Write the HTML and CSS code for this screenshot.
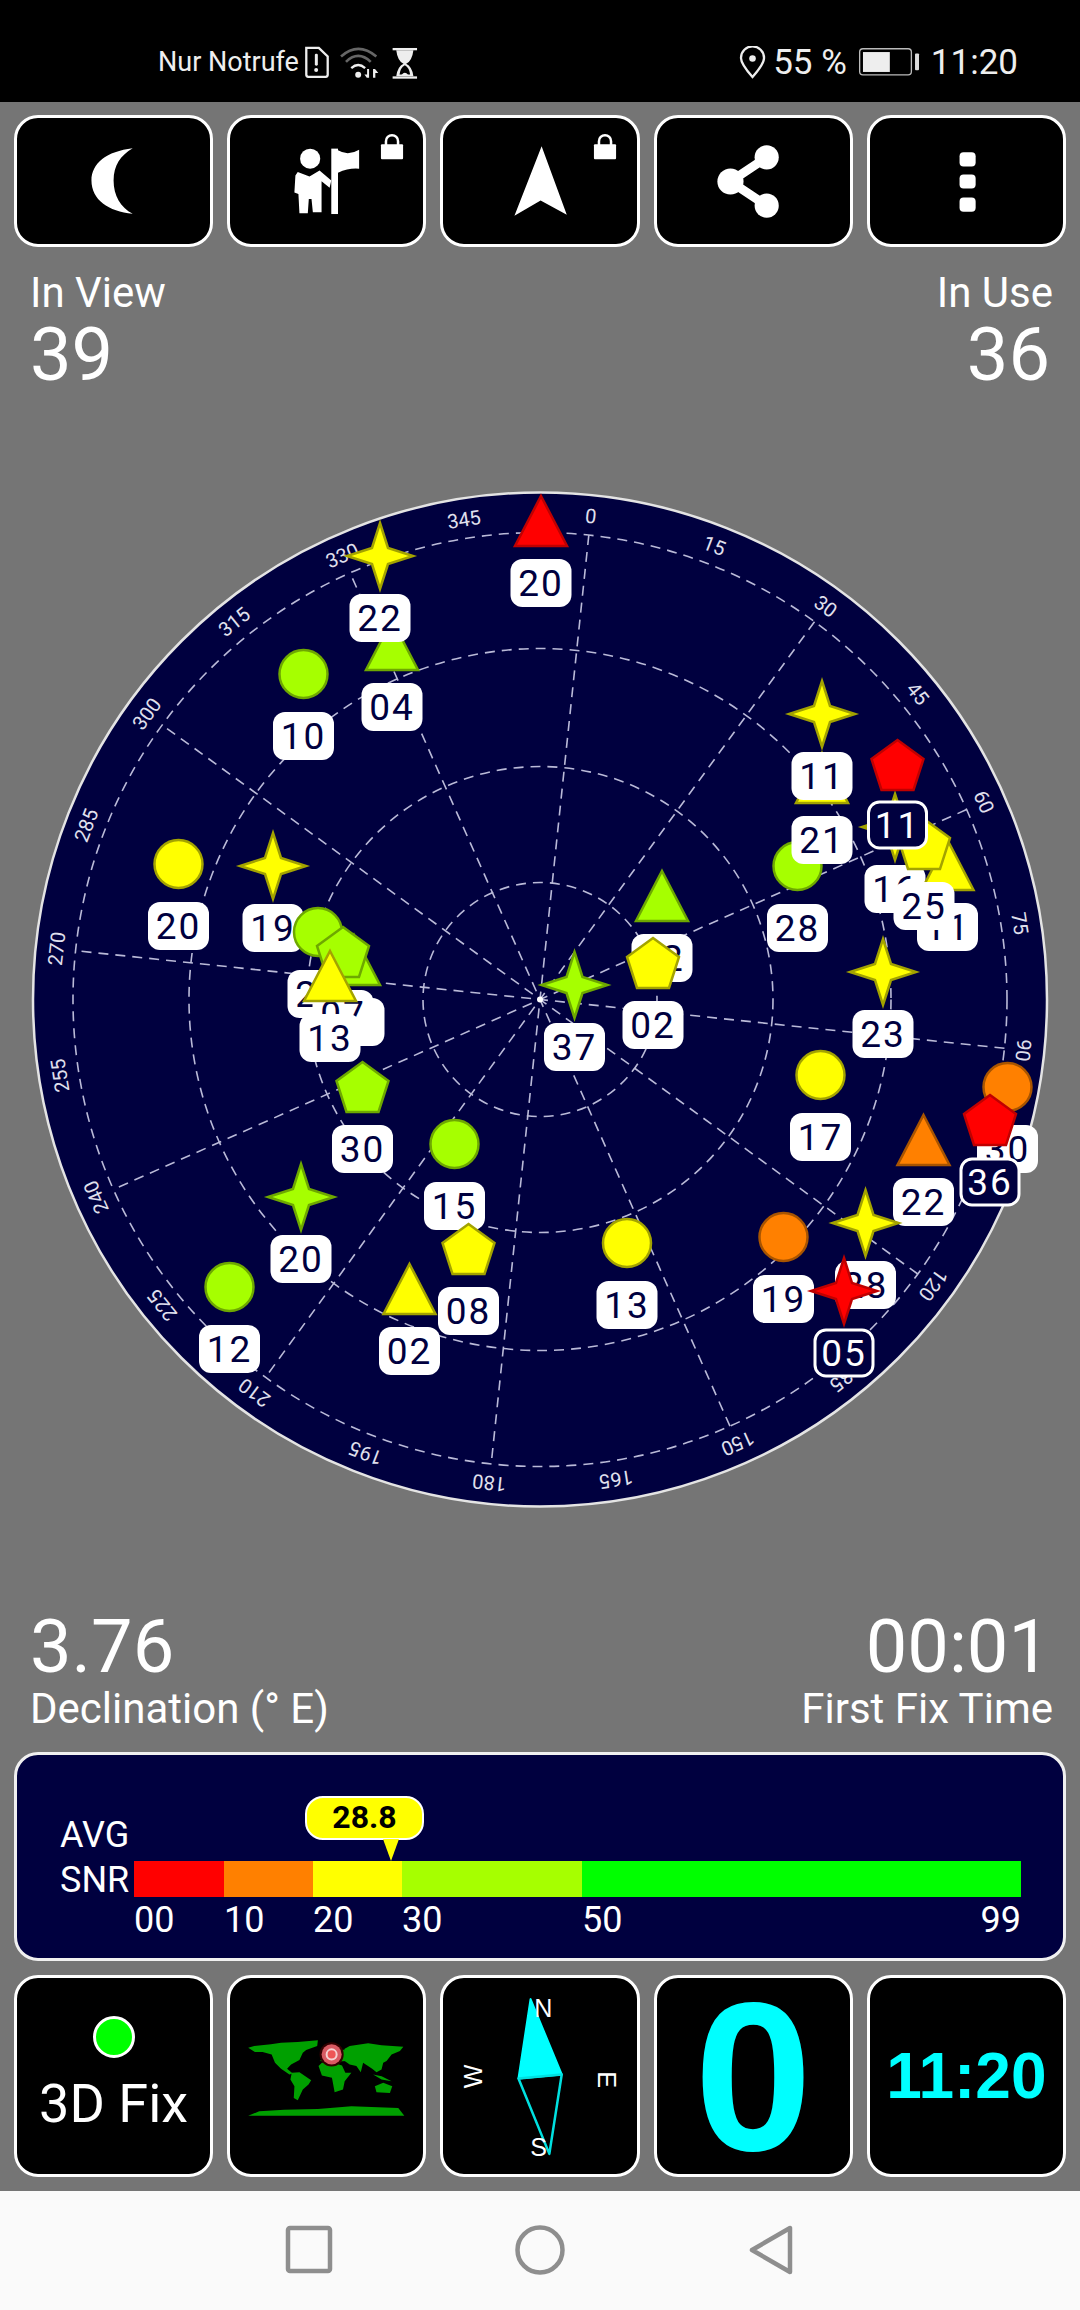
FILE: index.html
```html
<!DOCTYPE html>
<html lang="de">
<head>
    <meta charset="UTF-8">
    <title>GPS Test</title>
    <link rel="stylesheet" href="styles.css">
</head>
<body>
    <div class="status-bar">
        <span class="carrier">Nur Notrufe</span>
        <svg class="ic-sim" viewBox="40 28 85 105">
            <path class="st-line" d="M50 36H88L115 62V118Q115 124 109 124H56Q50 124 50 118Z"/>
            <rect class="st-fill" x="76" y="54" width="9" height="36" rx="4"/>
            <circle class="st-fill" cx="80" cy="103" r="6"/>
        </svg>
        <svg class="ic-wifi" viewBox="150 30 125 100">
            <path class="st-dim" d="M155 62Q207 16 262 62"/>
            <path class="st-dim" d="M170 78Q207 42 245 78"/>
            <path class="st-line" d="M186 97Q207 78 228 97"/>
            <circle class="st-fill" cx="207" cy="117" r="9"/>
            <path class="st-fill" d="M240 100V126H233L226 116H234V100ZM252 100H258L268 112H259V126H252Z"/>
        </svg>
        <svg class="ic-glass" viewBox="305 30 80 100">
            <rect class="st-fill" x="309" y="36" width="74" height="7"/>
            <rect class="st-fill" x="309" y="122" width="74" height="7"/>
            <path class="st-fill" d="M320 43H372Q368 76 350 84Q368 92 372 122H320Q324 92 342 84Q324 76 320 43Z"/>
            <path class="st-cut" d="M346 88Q332 96 330 116H362Q360 96 346 88Z"/>
            <path class="st-fill" d="M336 118Q346 104 356 118Z"/>
        </svg>
        <svg class="ic-pin" viewBox="22 30 85 100">
            <path class="st-line" d="M63 124Q28 84 28 66A35 35 0 0 1 98 66Q98 84 63 124Z"/>
            <circle class="st-fill" cx="63" cy="68" r="10"/>
        </svg>
        <span class="percent">55 %</span>
        <svg class="ic-batt" viewBox="372 38 190 90">
            <rect class="batt-case" x="377" y="43" width="156" height="79" rx="10"/>
            <rect class="st-fill" x="387" y="53" width="81" height="60"/>
            <rect class="batt-nub" x="544" y="57" width="12" height="51" rx="3"/>
        </svg>
        <span class="clock">11:20</span>
    </div>

    <div class="tile-row tools">
        <div class="tile">
            <svg viewBox="0 0 192 125"><path class="wh" d="M115 30C89 33 74 45 74 62C74 81 91 93 115 95C103 89 96 77 96 62C96 47 103 37 115 30Z"/></svg>
        </div>
        <div class="tile">
            <svg viewBox="0 0 192 125">
                <defs>
                    <g id="lock">
                        <rect class="wh" x="149" y="26" width="22" height="15" rx="1"/>
                        <path class="lock-arc" d="M154 27V23A6 6 0 0 1 166 23V27"/>
                    </g>
                </defs>
                <g transform="translate(-1 2) scale(.3333)">
                    <circle class="wh" cx="242" cy="115" r="30"/>
                    <path class="wh" d="M205 155L240 168L270 150L305 180L300 202L276 182V275H250L246 235H238L235 278H210L207 220L195 216L198 165Z"/>
                    <rect class="wh" x="305" y="85" width="20" height="195"/>
                    <path class="wh" d="M325 90Q355 108 388 88V145Q358 142 325 157Z"/>
                </g>
                <use href="#lock" transform="translate(1 0)"/>
            </svg>
        </div>
        <div class="tile">
            <svg viewBox="0 0 192 125">
                <path class="wh" d="M98 28L123 96L97 82L71 97Z"/>
                <use href="#lock" transform="translate(1 0)"/>
            </svg>
        </div>
        <div class="tile">
            <svg viewBox="0 0 192 125">
                <path class="share-line" d="M109 39L73 63L109 87"/>
                <circle class="wh" cx="109" cy="39" r="12"/>
                <circle class="wh" cx="73" cy="63" r="13"/>
                <circle class="wh" cx="109" cy="87" r="12"/>
            </svg>
        </div>
        <div class="tile">
            <svg viewBox="0 0 192 125">
                <rect class="wh" x="89" y="34" width="16" height="14" rx="4"/>
                <rect class="wh" x="89" y="56" width="16" height="14" rx="4"/>
                <rect class="wh" x="89" y="79" width="16" height="14" rx="4"/>
            </svg>
        </div>
    </div>

    <div class="stats">
        <div class="stat">
            <div class="stat-label">In View</div>
            <div class="stat-num">39</div>
        </div>
        <div class="stat stat-right">
            <div class="stat-label">In Use</div>
            <div class="stat-num">36</div>
        </div>
    </div>

    <svg class="radar" viewBox="0 393 1080 1216">
        <defs>
            <polygon id="star" points="0,-33 8,-8 33,0 8,8 0,33 -8,8 -33,0 -8,-8"/>
            <polygon id="tri" points="0,-25 26,25 -26,25"/>
            <polygon id="pent" points="0,-25 26,-6 16,25 -16,25 -26,-6"/>
            <circle id="dot" r="24"/>
        </defs>

        <g transform="translate(540 999.5)">
            <circle class="rim" r="507"/>
            <circle class="ring" r="467"/>
            <circle class="ring" r="351"/>
            <circle class="ring" r="233"/>
            <circle class="ring" r="117"/>
            <g transform="rotate(6)">
                <line class="spoke" y1="-467" y2="467"/>
                <line class="spoke" y1="-467" y2="467" transform="rotate(30)"/>
                <line class="spoke" y1="-467" y2="467" transform="rotate(60)"/>
                <line class="spoke" y1="-467" y2="467" transform="rotate(90)"/>
                <line class="spoke" y1="-467" y2="467" transform="rotate(120)"/>
                <line class="spoke" y1="-467" y2="467" transform="rotate(150)"/>
                <text class="deg" y="-479">0</text>
                <text class="deg" y="-479" transform="rotate(15)">15</text>
                <text class="deg" y="-479" transform="rotate(30)">30</text>
                <text class="deg" y="-479" transform="rotate(45)">45</text>
                <text class="deg" y="-479" transform="rotate(60)">60</text>
                <text class="deg" y="-479" transform="rotate(75)">75</text>
                <text class="deg" y="-479" transform="rotate(90)">90</text>
                <text class="deg" y="-479" transform="rotate(105)">105</text>
                <text class="deg" y="-479" transform="rotate(120)">120</text>
                <text class="deg" y="-479" transform="rotate(135)">135</text>
                <text class="deg" y="-479" transform="rotate(150)">150</text>
                <text class="deg" y="-479" transform="rotate(165)">165</text>
                <text class="deg" y="-479" transform="rotate(180)">180</text>
                <text class="deg" y="-479" transform="rotate(195)">195</text>
                <text class="deg" y="-479" transform="rotate(210)">210</text>
                <text class="deg" y="-479" transform="rotate(225)">225</text>
                <text class="deg" y="-479" transform="rotate(240)">240</text>
                <text class="deg" y="-479" transform="rotate(255)">255</text>
                <text class="deg" y="-479" transform="rotate(270)">270</text>
                <text class="deg" y="-479" transform="rotate(285)">285</text>
                <text class="deg" y="-479" transform="rotate(300)">300</text>
                <text class="deg" y="-479" transform="rotate(315)">315</text>
                <text class="deg" y="-479" transform="rotate(330)">330</text>
                <text class="deg" y="-479" transform="rotate(345)">345</text>
            </g>
            <circle class="hub" r="3"/>
        </g>

        <!-- satellites, drawn in this order so they overlap like the app -->
        <g class="sat red" transform="translate(541 521)"><use href="#tri"/><rect class="tag" x="-30.5" y="38" width="61" height="48" rx="12"/><text y="75">20</text></g>
        <g class="sat lime" transform="translate(392 645)"><use href="#tri"/><rect class="tag" x="-30.5" y="38" width="61" height="48" rx="12"/><text y="75">04</text></g>
        <g class="sat yellow" transform="translate(380 556)"><use href="#star"/><rect class="tag" x="-30.5" y="38" width="61" height="48" rx="12"/><text y="75">22</text></g>
        <g class="sat lime" transform="translate(303.5 674)"><use href="#dot"/><rect class="tag" x="-30.5" y="38" width="61" height="48" rx="12"/><text y="75">10</text></g>
        <g class="sat yellow" transform="translate(178.5 864)"><use href="#dot"/><rect class="tag" x="-30.5" y="38" width="61" height="48" rx="12"/><text y="75">20</text></g>
        <g class="sat yellow" transform="translate(273 866)"><use href="#star"/><rect class="tag" x="-30.5" y="38" width="61" height="48" rx="12"/><text y="75">19</text></g>
        <g class="sat lime" transform="translate(318 932)"><use href="#dot"/><rect class="tag" x="-30.5" y="38" width="61" height="48" rx="12"/><text y="75">21</text></g>
        <g class="sat lime" transform="translate(354 960)"><use href="#tri"/><rect class="tag" x="-30.5" y="38" width="61" height="48" rx="12"/><text y="75">09</text></g>
        <g class="sat lime" transform="translate(343 952)"><use href="#pent"/><rect class="tag" x="-30.5" y="38" width="61" height="48" rx="12"/><text y="75">07</text></g>
        <g class="sat yellow" transform="translate(330 976)"><use href="#tri"/><rect class="tag" x="-30.5" y="38" width="61" height="48" rx="12"/><text y="75">13</text></g>
        <g class="sat lime" transform="translate(362.5 1087)"><use href="#pent"/><rect class="tag" x="-30.5" y="38" width="61" height="48" rx="12"/><text y="75">30</text></g>
        <g class="sat lime" transform="translate(454.5 1144)"><use href="#dot"/><rect class="tag" x="-30.5" y="38" width="61" height="48" rx="12"/><text y="75">15</text></g>
        <g class="sat yellow" transform="translate(468.5 1249)"><use href="#pent"/><rect class="tag" x="-30.5" y="38" width="61" height="48" rx="12"/><text y="75">08</text></g>
        <g class="sat lime" transform="translate(301 1197)"><use href="#star"/><rect class="tag" x="-30.5" y="38" width="61" height="48" rx="12"/><text y="75">20</text></g>
        <g class="sat yellow" transform="translate(409.5 1289)"><use href="#tri"/><rect class="tag" x="-30.5" y="38" width="61" height="48" rx="12"/><text y="75">02</text></g>
        <g class="sat lime" transform="translate(229.5 1287)"><use href="#dot"/><rect class="tag" x="-30.5" y="38" width="61" height="48" rx="12"/><text y="75">12</text></g>
        <g class="sat lime" transform="translate(797.5 866)"><use href="#dot"/><rect class="tag" x="-30.5" y="38" width="61" height="48" rx="12"/><text y="75">28</text></g>
        <g class="sat yellow" transform="translate(822 778)"><use href="#tri"/><rect class="tag" x="-30.5" y="38" width="61" height="48" rx="12"/><text y="75">21</text></g>
        <g class="sat yellow" transform="translate(822 714)"><use href="#star"/><rect class="tag" x="-30.5" y="38" width="61" height="48" rx="12"/><text y="75">11</text></g>
        <g class="sat yellow" transform="translate(895 827)"><use href="#star"/><rect class="tag" x="-30.5" y="38" width="61" height="48" rx="12"/><text y="75">16</text></g>
        <g class="sat yellow" transform="translate(947.5 865)"><use href="#tri"/><rect class="tag" x="-30.5" y="38" width="61" height="48" rx="12"/><text y="75">11</text></g>
        <g class="sat yellow" transform="translate(924 844)"><use href="#pent"/><rect class="tag" x="-30.5" y="38" width="61" height="48" rx="12"/><text y="75">25</text></g>
        <g class="sat lime" transform="translate(662 896)"><use href="#tri"/><rect class="tag" x="-30.5" y="38" width="61" height="48" rx="12"/><text y="75">12</text></g>
        <g class="sat yellow" transform="translate(653 963)"><use href="#pent"/><rect class="tag" x="-30.5" y="38" width="61" height="48" rx="12"/><text y="75">02</text></g>
        <g class="sat lime" transform="translate(574.5 985)"><use href="#star"/><rect class="tag" x="-30.5" y="38" width="61" height="48" rx="12"/><text y="75">37</text></g>
        <g class="sat yellow" transform="translate(883 972)"><use href="#star"/><rect class="tag" x="-30.5" y="38" width="61" height="48" rx="12"/><text y="75">23</text></g>
        <g class="sat yellow" transform="translate(820.5 1075)"><use href="#dot"/><rect class="tag" x="-30.5" y="38" width="61" height="48" rx="12"/><text y="75">17</text></g>
        <g class="sat yellow" transform="translate(627 1243)"><use href="#dot"/><rect class="tag" x="-30.5" y="38" width="61" height="48" rx="12"/><text y="75">13</text></g>
        <g class="sat orange" transform="translate(783.5 1237)"><use href="#dot"/><rect class="tag" x="-30.5" y="38" width="61" height="48" rx="12"/><text y="75">19</text></g>
        <g class="sat orange" transform="translate(923.5 1140)"><use href="#tri"/><rect class="tag" x="-30.5" y="38" width="61" height="48" rx="12"/><text y="75">22</text></g>
        <g class="sat yellow" transform="translate(865.5 1223)"><use href="#star"/><rect class="tag" x="-30.5" y="38" width="61" height="48" rx="12"/><text y="75">28</text></g>
        <g class="sat orange" transform="translate(1007.5 1087)"><use href="#dot"/><rect class="tag" x="-30.5" y="38" width="61" height="48" rx="12"/><text y="75">30</text></g>
        <g class="sat red sel" transform="translate(897.5 765)"><use href="#pent"/><rect class="tag" x="-29" y="37" width="58" height="46" rx="11"/><text y="73">11</text></g>
        <g class="sat red sel" transform="translate(990 1120)"><use href="#pent"/><rect class="tag" x="-29" y="39" width="58" height="46" rx="11"/><text y="75">36</text></g>
        <g class="sat red sel" transform="translate(844 1291)"><use href="#star"/><rect class="tag" x="-29" y="39" width="58" height="46" rx="11"/><text y="75">05</text></g>
    </svg>

    <div class="stats">
        <div class="stat">
            <div class="stat-num">3.76</div>
            <div class="stat-label">Declination (° E)</div>
        </div>
        <div class="stat stat-right">
            <div class="stat-num">00:01</div>
            <div class="stat-label">First Fix Time</div>
        </div>
    </div>

    <div class="snr-panel">
        <div class="snr-names">
            <div>AVG</div>
            <div>SNR</div>
        </div>
        <div class="snr-main">
            <div class="snr-bar">
                <div class="seg seg-a"></div>
                <div class="seg seg-b"></div>
                <div class="seg seg-c"></div>
                <div class="seg seg-d"></div>
                <div class="seg seg-e"></div>
            </div>
            <div class="snr-bar snr-scale">
                <div class="seg seg-a">00</div>
                <div class="seg seg-b">10</div>
                <div class="seg seg-c">20</div>
                <div class="seg seg-d">30</div>
                <div class="seg seg-e"><span>50</span><span>99</span></div>
            </div>
        </div>
        <div class="snr-bubble">28.8</div>
    </div>

    <div class="tile-row tiles-bottom">
        <div class="tile tile-fix">
            <div class="fix-dot"></div>
            <div class="fix-text">3D Fix</div>
        </div>
        <div class="tile">
            <svg viewBox="0 0 192 195">
                <g class="land" transform="translate(4 51) scale(.3333)">
                    <path d="M42 55L60 50L110 45L140 40L190 38L250 33L248 50L215 62L205 70L195 92L170 105L158 118L175 132L165 135L140 118L122 100L112 75L85 68L62 68Z"/>
                    <path d="M172 130L195 128L230 152L222 165L205 180L190 212L178 205L180 170L168 150Z"/>
                    <path d="M252 110L262 100L290 98L322 108L332 130L350 130L330 155L325 180L300 188L292 145L262 138Z"/>
                    <path d="M255 95L330 60L335 95L290 98Z"/>
                    <path d="M330 58L345 50L400 42L440 48L505 52L495 65L470 75L455 95L445 100L440 120L425 128L412 118L385 100L378 128L365 110L345 105L330 95Z"/>
                    <path d="M420 170L445 160L472 170L465 190L425 188Z"/>
                    <path d="M415 135L440 140L470 155L440 150Z"/>
                    <path d="M42 258L75 245L150 240L250 238L350 230L490 235L508 258Z"/>
                </g>
                <circle class="loc-shadow" cx="101" cy="76" r="12"/>
                <circle class="loc-outer" cx="101" cy="76" r="10"/>
                <circle class="loc-ring" cx="101" cy="76" r="5"/>
            </svg>
        </div>
        <div class="tile">
            <svg viewBox="0 0 192 195">
                <path class="needle-n" d="M87 21L75 100L118 96Z"/>
                <path class="needle-s" d="M75 100L118 96L105.700 175Z"/>
                <text class="compass-txt" x="99.700" y="39">N</text>
                <text class="compass-txt" x="95" y="177">S</text>
                <text class="compass-txt" transform="translate(39 98) rotate(-90)">W</text>
                <text class="compass-txt" transform="translate(154 101) rotate(90)">E</text>
            </svg>
        </div>
        <div class="tile tile-big">0</div>
        <div class="tile tile-time">11:20</div>
    </div>

    <div class="nav-bar">
        <svg viewBox="0 0 50 50"><rect class="nav-line" x="4" y="3" width="42" height="43" rx="2"/></svg>
        <svg viewBox="0 0 50 50"><circle class="nav-line" cx="25" cy="25" r="22.500"/></svg>
        <svg viewBox="0 0 50 50"><path class="nav-line" d="M44 3V47L6 25Z"/></svg>
    </div>
</body>
</html>
```

FILE: styles.css
```css
* {
    box-sizing: border-box;
}

body {
    margin: 0;
    width: 1080px;
    height: 2310px;
    overflow: hidden;
    background-color: #757575;
    font-family: Roboto, sans-serif;
    color: #fff;
}

/* status bar */
.status-bar {
    height: 102px;
    padding: 22px 62px 0 158px;
    background-color: #000;
    color: #eee;
    display: flex;
    align-items: center;
}

.carrier {
    font-size: 27px;
    width: 145px;
}

.percent {
    font-size: 35px;
    margin-left: 6px;
}

.clock {
    font-size: 35px;
    margin-left: 10px;
}

.ic-sim { width: 28px; height: 35px; }
.ic-wifi { width: 42px; height: 33px; margin-left: 8px; }
.ic-glass { width: 27px; height: 33px; margin-left: 10px; }
.ic-pin { width: 28px; height: 33px; margin-left: auto; }
.ic-batt { width: 63px; height: 30px; margin-left: 11px; }

.st-line { fill: none; stroke: #eee; stroke-width: 7; }
.st-dim { fill: none; stroke: #666; stroke-width: 8; }
.st-fill { fill: #eee; }
.st-cut { fill: #000; }
.batt-case { fill: none; stroke: #bbb; stroke-width: 4; }
.batt-nub { fill: #ddd; }

/* square buttons */
.tile-row {
    display: grid;
    grid-template-columns: repeat(5, 1fr);
    gap: 14px;
    padding: 0 14px;
}

.tools {
    margin-top: 13px;
    height: 132px;
}

.tiles-bottom {
    margin-top: 14px;
    height: 202px;
}

.tile {
    background-color: #000;
    border: 3.500px solid #fff;
    border-radius: 24px;
    overflow: hidden;
}

.tile svg {
    display: block;
    width: 100%;
    height: 100%;
}

.wh { fill: #fff; }
.lock-arc { fill: none; stroke: #fff; stroke-width: 2.500; }
.share-line { fill: none; stroke: #fff; stroke-width: 9; }

/* numbers */
.stats {
    display: flex;
    justify-content: space-between;
    padding: 0 27px 0 30px;
}

.tools + .stats {
    margin-top: 22px;
}

.stat-right {
    text-align: right;
}

.stat-label {
    font-size: 42px;
    line-height: 48px;
}

.stat-num {
    font-size: 74px;
    line-height: 72px;
    margin: 2px 0;
}

.stat-right .stat-num {
    margin-right: 3px;
}

/* sky plot */
.radar {
    display: block;
    width: 1080px;
    height: 1216px;
}

.rim { fill: #00003f; stroke: #e4e4e4; stroke-width: 2.500; }
.ring { fill: none; stroke: #babad8; stroke-width: 1.600; stroke-dasharray: 10 7; }
.spoke { stroke: #babad8; stroke-width: 1.600; stroke-dasharray: 10 7; }
.hub { fill: #fff; }

.deg {
    fill: #e0e0ee;
    font-size: 20px;
    text-anchor: middle;
}

.sat { stroke-width: 2.500; }
.yellow { fill: #ffff00; stroke: #a3a300; }
.lime { fill: #a6ff00; stroke: #6ea800; }
.orange { fill: #ff8000; stroke: #a85400; }
.red { fill: #ff0000; stroke: #c00000; }

.tag { fill: #fff; stroke: none; }

.sat text {
    fill: #00003f;
    stroke: none;
    font-size: 37px;
    letter-spacing: 2px;
    text-anchor: middle;
}

.sel .tag { fill: #00003f; stroke: #fff; stroke-width: 3; }
.sel text { fill: #fff; }

/* snr panel */
.snr-panel {
    position: relative;
    height: 209px;
    margin: 19px 14px 0;
    padding: 58px 0 0 43px;
    background-color: #00003f;
    border: 3.500px solid #f0f0f0;
    border-radius: 24px;
    display: flex;
    font-size: 36px;
}

.snr-names {
    width: 74px;
    line-height: 45px;
}

.snr-main {
    width: 887px;
    padding-top: 48px;
}

.snr-bar {
    display: flex;
    height: 36px;
}

.seg-a { width: 90px; background-color: #ff0000; }
.seg-b { width: 89px; background-color: #ff8000; }
.seg-c { width: 89px; background-color: #ffff00; }
.seg-d { width: 180px; background-color: #a6ff00; }
.seg-e { width: 439px; background-color: #00ff00; }

.snr-scale {
    height: 40px;
    margin-top: 3px;
    line-height: 40px;
}

.snr-scale .seg {
    background: none;
}

.snr-scale .seg-e {
    display: flex;
    justify-content: space-between;
    margin-right: -2px;
}

.snr-bubble {
    position: absolute;
    left: 288px;
    top: 41px;
    width: 119px;
    height: 44px;
    background-color: #ffff00;
    border: 2px solid #fff;
    border-radius: 18px;
    color: #000;
    font-size: 32px;
    font-weight: bold;
    line-height: 38px;
    text-align: center;
}

.snr-bubble::after {
    content: "";
    position: absolute;
    left: 76px;
    top: 41px;
    border-left: 8px solid transparent;
    border-right: 8px solid transparent;
    border-top: 22px solid #ffff00;
}

/* bottom tiles */
.tile-fix {
    display: flex;
    flex-direction: column;
    align-items: center;
    padding-top: 38px;
}

.fix-dot {
    width: 42px;
    height: 42px;
    background-color: #00ff00;
    border: 3px solid #fff;
    border-radius: 50%;
}

.fix-text {
    margin-top: 16px;
    font-size: 54px;
    line-height: 60px;
}

.land { fill: #00a000; }
.loc-shadow { fill: #300; }
.loc-outer { fill: #d85a62; }
.loc-ring { fill: #ee5555; stroke: #f6d0d0; stroke-width: 2; }

.needle-n { fill: #00ffff; stroke: #00ffff; stroke-width: 2; stroke-linejoin: round; }
.needle-s { fill: none; stroke: #00e0e0; stroke-width: 2.500; stroke-linejoin: round; }

.compass-txt {
    fill: #fff;
    font-family: "Liberation Sans", sans-serif;
    font-size: 25px;
    text-anchor: middle;
}

.tile-big,
.tile-time {
    display: flex;
    align-items: center;
    justify-content: center;
    color: #00ffff;
    font-family: "Liberation Sans", sans-serif;
    font-weight: bold;
}

.tile-big {
    font-size: 212px;
    line-height: 195px;
    overflow: visible;
}

.tile-time {
    font-size: 64px;
}

/* android nav */
.nav-bar {
    height: 121px;
    margin-top: 14px;
    padding-top: 34px;
    background-color: #fafafa;
    display: flex;
    justify-content: center;
    gap: 181px;
}

.nav-bar svg {
    width: 50px;
    height: 50px;
}

.nav-line {
    fill: none;
    stroke: #8e8e8e;
    stroke-width: 4.500;
    stroke-linejoin: round;
}
```
